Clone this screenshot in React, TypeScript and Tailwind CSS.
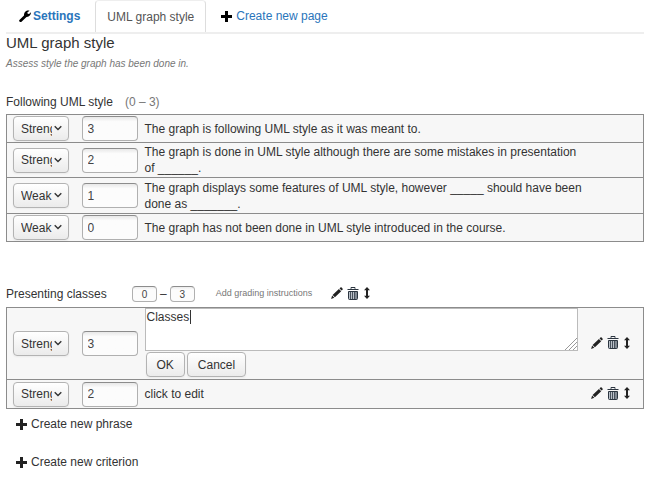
import { useState } from "react";
import type { ReactNode } from "react";

type Phrase = { quality: string; points: string; text: string };

const styleRows: Phrase[] = [
  { quality: "Strength", points: "3", text: "The graph is following UML style as it was meant to." },
  {
    quality: "Strength",
    points: "2",
    text: "The graph is done in UML style although there are some mistakes in presentation of ______.",
  },
  {
    quality: "Weak",
    points: "1",
    text: "The graph displays some features of UML style, however _____ should have been done as _______.",
  },
  { quality: "Weak", points: "0", text: "The graph has not been done in UML style introduced in the course." },
];

function WrenchIcon() {
  return (
    <svg viewBox="0 0 12 12" className="size-3 fill-black" aria-hidden="true">
      <path d="M.4 10 5 5.6C4.8 3.6 5.7 1.5 7.6.8 8.5.4 9.6.3 10.5.8L8.3 2.6l.4 1.1 1.4.2 1.8-1.6c.3 2.5-1.6 4.8-4.4 4.6L2.5 11.7c-.6.5-1.5.4-2-.1-.4-.5-.5-1.1-.1-1.6Z" />
    </svg>
  );
}

function PlusIcon({ className }: { className: string }) {
  return (
    <svg viewBox="0 0 11 11" className={className} aria-hidden="true">
      <path d="M4 0h3v4h4v3H7v4H4V7H0V4h4Z" />
    </svg>
  );
}

function PencilIcon() {
  return (
    <svg viewBox="0 0 12 12" className="size-3 fill-[#222]" aria-hidden="true">
      <path d="M9.3.7c.4-.5.9-.5 1.3-.1l.9.9c.4.4.4.9 0 1.3l-.8.8-2.2-2.2ZM7.9 2l2.3 2.3-6.3 6L1.6 8ZM1.1 8.6l2.2 2.2L.1 11.9Z" />
    </svg>
  );
}

function TrashIcon() {
  return (
    <svg viewBox="0 0 12 13" className="h-[13px] w-3" fill="none" stroke="#2b3540" aria-hidden="true">
      <path d="M4 1.8V.5h4v1.3" />
      <path d="M.5 2.5h11" />
      <path d="M1.5 4.5h9v7q0 1-1 1h-7q-1 0-1-1Z" fill="#b9c0c8" />
      <path d="M3.5 4.5v8M5.5 4.5v8M7.5 4.5v8M9 4.5v8" strokeWidth=".8" />
    </svg>
  );
}

function MoveIcon() {
  return (
    <svg viewBox="0 0 6 12" className="h-3 w-1.5 fill-[#222]" aria-hidden="true">
      <path d="M3 0 6 3.2H4v5.6h2L3 12 0 8.8h2V3.2H0Z" />
    </svg>
  );
}

function Actions({ name }: { name: string }) {
  return (
    <div className="flex items-center gap-1 pb-0.5">
      <button type="button" aria-label={`Edit ${name}`}>
        <PencilIcon />
      </button>
      <button type="button" aria-label={`Delete ${name}`}>
        <TrashIcon />
      </button>
      <button type="button" aria-label={`Move ${name}`} className="ml-px">
        <MoveIcon />
      </button>
    </div>
  );
}

function QualitySelect({ value, name }: { value: string; name: string }) {
  return (
    <div className="relative w-14">
      <select
        aria-label={`Quality of ${name}`}
        defaultValue={value}
        className="block h-[25px] w-full appearance-none overflow-hidden rounded border border-[#b3b3b3] bg-linear-to-b from-white to-[#ebebeb] pr-4 pl-[7px] text-[12px] text-[#333] shadow-xs"
      >
        <option value="Strength">Strength</option>
        <option value="Weak">Weak</option>
      </select>
      <svg
        viewBox="0 0 8 5"
        className="pointer-events-none absolute top-[9px] right-[7px] h-[6px] w-2"
        fill="none"
        stroke="#333"
        strokeWidth="1.4"
        aria-hidden="true"
      >
        <path d="m.7.7 3.3 3.2L7.3.7" />
      </svg>
    </div>
  );
}

function PhraseRow({
  phrase,
  height,
  actions,
  children,
}: {
  phrase: Phrase;
  height: string;
  actions?: boolean;
  children?: ReactNode;
}) {
  return (
    <tr className={`border border-[#8c8c8c] ${height}`}>
      <td className="pl-1.5">
        <QualitySelect value={phrase.quality} name={phrase.text} />
      </td>
      <td>
        <input
          type="text"
          aria-label={`Points for ${phrase.text}`}
          defaultValue={phrase.points}
          className="block h-[25px] w-14 rounded border border-[#b0b0b0] border-t-[#8c8c8c] bg-linear-to-b from-[#e8e8e8] to-[#fcfcfc] to-20% px-[5px] text-[12px] text-[#444]"
        />
      </td>
      {children ? (
        <td className="align-top">{children}</td>
      ) : (
        <td className="leading-4">
          <p>{phrase.text}</p>
        </td>
      )}
      <td className="pl-[5px]">{actions && <Actions name={phrase.text} />}</td>
    </tr>
  );
}

function PhraseTable({ children }: { children: ReactNode }) {
  return (
    <table className="w-full table-fixed border-collapse bg-[#f7f7f7]">
      <colgroup>
        <col className="w-[75px]" />
        <col className="w-[63px]" />
        <col />
        <col className="w-[58px]" />
      </colgroup>
      <tbody>{children}</tbody>
    </table>
  );
}

const buttonClass =
  "h-[25px] rounded border border-[#b3b3b3] bg-linear-to-b from-white to-[#ebebeb] px-2.5 text-[12px] shadow-xs";
const limitClass =
  "h-4 w-[25px] rounded border border-[#b0b0b0] border-t-[#8c8c8c] bg-linear-to-b from-[#ececec] to-[#fcfcfc] to-20% text-center text-[10px] text-[#444]";

export default function App() {
  const [draft, setDraft] = useState("Classes");

  return (
    <main className="bg-white px-1.5 font-['Liberation_Sans',Arial,sans-serif] text-[12px] text-[#333]">
      <nav className="flex h-[34px] border-b-2 border-[#eee]">
        <a href="#settings" className="flex items-center gap-0.5 pr-[15px] pl-[13px] font-bold text-[#2a75bb]">
          <WrenchIcon />
          Settings
        </a>
        <a
          href="#graph-style"
          aria-current="page"
          className="flex items-center rounded-t border-x border-t border-x-[#ddd] border-t-[#eee] px-[11px] text-[#555]"
        >
          UML graph style
        </a>
        <a href="#new-page" className="flex items-center gap-1 px-[15px] text-[#2a75bb]">
          <PlusIcon className="size-[11px] fill-black" />
          Create new page
        </a>
      </nav>

      <h1 className="text-[15px] leading-[18px]">UML graph style</h1>
      <p className="pt-1 text-[10px] leading-4 text-[#777] italic">Assess style the graph has been done in.</p>

      <section className="pt-5">
        <h2 className="mb-0.5 flex h-5 items-center gap-3">
          Following UML style <span className="text-[#777]">(0 – 3)</span>
        </h2>
        <PhraseTable>
          <PhraseRow phrase={styleRows[0]} height="h-7" />
          <PhraseRow phrase={styleRows[1]} height="h-[35px]" />
          <PhraseRow phrase={styleRows[2]} height="h-9" />
          <PhraseRow phrase={styleRows[3]} height="h-7" />
        </PhraseTable>
      </section>

      <section className="pt-10">
        <div className="mb-px flex h-6 items-center">
          <h2 className="w-[126px]">Presenting classes</h2>
          <input type="text" aria-label="Minimum points" defaultValue="0" className={limitClass} />
          <span className="px-[3px]">–</span>
          <input type="text" aria-label="Maximum points" defaultValue="3" className={limitClass} />
          <a href="#instructions" className="w-[136px] pl-[21px] text-[9px] whitespace-nowrap text-[#777]">
            Add grading instructions
          </a>
          <Actions name="Presenting classes" />
        </div>
        <PhraseTable>
          <PhraseRow phrase={{ quality: "Strength", points: "3", text: "Classes" }} height="h-[72px]" actions>
            <form className="pr-2" onSubmit={(event) => event.preventDefault()}>
              <div className="relative">
                <textarea
                  aria-label="Phrase text"
                  value={draft}
                  onChange={(event) => setDraft(event.target.value)}
                  className="block h-[43px] w-full resize-none border border-[#bbb] bg-white px-px text-[12px] leading-4 outline-none"
                />
                {draft === "Classes" && (
                  <span className="pointer-events-none absolute top-0.5 left-[45px] h-3.5 w-px bg-[#333]" />
                )}
                <svg
                  viewBox="0 0 12 12"
                  className="pointer-events-none absolute right-px bottom-px size-3"
                  stroke="#999"
                  aria-hidden="true"
                >
                  <path d="M0 12 12 0M4 12l8-8M8 12l4-4" />
                </svg>
              </div>
              <div className="flex gap-0.5 pt-px pl-px">
                <button type="submit" className={buttonClass}>
                  OK
                </button>
                <button type="button" className={buttonClass}>
                  Cancel
                </button>
              </div>
            </form>
          </PhraseRow>
          <PhraseRow
            phrase={{ quality: "Strength", points: "2", text: "click to edit" }}
            height="h-[29px]"
            actions
          />
        </PhraseTable>
        <button type="button" className="flex h-[30px] items-center gap-1 pl-2.5">
          <PlusIcon className="size-[11px] fill-[#222]" />
          Create new phrase
        </button>
      </section>

      <button type="button" className="mt-2 flex h-[30px] items-center gap-1 pl-2.5">
        <PlusIcon className="size-[11px] fill-[#222]" />
        Create new criterion
      </button>
    </main>
  );
}
